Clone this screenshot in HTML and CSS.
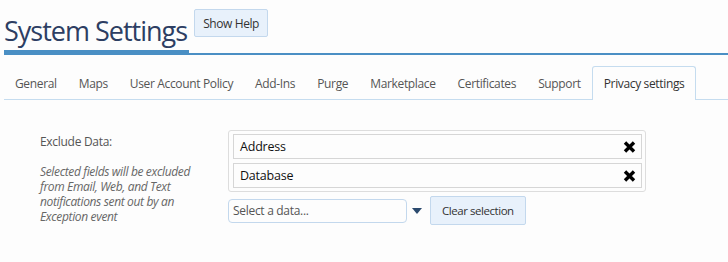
FILE: index.html
```html
<!DOCTYPE html>
<html lang="en">
<head>
    <meta charset="UTF-8">
    <title>System Settings</title>
    <link rel="stylesheet" href="styles.css">
</head>
<body>

    <div class="page-header">
        <h1 class="page-title">System Settings</h1>
        <button type="button" class="help-button">Show Help</button>
    </div>

    <ul class="tabs">
        <li class="tab">General</li>
        <li class="tab">Maps</li>
        <li class="tab">User Account Policy</li>
        <li class="tab">Add-Ins</li>
        <li class="tab">Purge</li>
        <li class="tab">Marketplace</li>
        <li class="tab">Certificates</li>
        <li class="tab">Support</li>
        <li class="tab active">Privacy settings</li>
    </ul>

    <div class="settings-row">
        <div class="settings-label">
            <div class="label-title">Exclude Data:</div>
            <p class="label-note">Selected fields will be excluded from Email, Web, and Text notifications sent out by an Exception event</p>
        </div>

        <div class="settings-field">
            <div class="selected-list">
                <div class="selected-item">
                    <span>Address</span>
                    <svg class="remove-icon" width="13" height="12" viewBox="0 0 13 12">
                        <path d="M2 1.5 L11 10.5 M11 1.5 L2 10.5" stroke="#000" stroke-width="3.4"/>
                    </svg>
                </div>
                <div class="selected-item">
                    <span>Database</span>
                    <svg class="remove-icon" width="13" height="12" viewBox="0 0 13 12">
                        <path d="M2 1.5 L11 10.5 M11 1.5 L2 10.5" stroke="#000" stroke-width="3.4"/>
                    </svg>
                </div>
            </div>

            <div class="select-row">
                <div class="select-box">Select a data...</div>
                <svg class="caret" width="10" height="6" viewBox="0 0 10 6">
                    <path d="M0 0 H10 L5 6 Z" fill="#2b4a6e"/>
                </svg>
                <button type="button" class="clear-button">Clear selection</button>
            </div>
        </div>
    </div>

</body>
</html>
```

FILE: styles.css
```css
body {
    font-family: 'Open Sans', 'Noto Sans', sans-serif;
    margin: 0;
    background-color: #fdfdfd;
    color: #333;
}

/* Header */
.page-header {
    display: flex;
    align-items: center;
    margin-left: 4px;
    border-bottom: 2px solid #4a8fc4;
    height: 55px;
    box-sizing: border-box;
}

.page-title {
    font-size: 27px;
    font-weight: normal;
    color: #2d3e63;
    margin: 0;
    padding: 6px 2px 0 0;
    height: 49px;
    line-height: 42px;
    box-sizing: border-box;
    border-bottom: 3px solid #4a8fc4;
    align-self: flex-end;
    letter-spacing: -1px;
}

.help-button {
    font-family: inherit;
    font-size: 12px;
    color: #333;
    background-color: #e8f1fb;
    border: 1px solid #c3d8ed;
    border-radius: 2px;
    padding: 0 8px;
    height: 28px;
    margin-left: 5px;
    margin-bottom: 7px;
    letter-spacing: -0.4px;
}

/* Tabs */
.tabs {
    list-style: none;
    display: flex;
    margin: 11px 0 0 4px;
    padding: 0;
    border-bottom: 1px solid #c5dcef;
}

.tab {
    font-size: 12px;
    color: #555;
    padding: 0 10px;
    height: 32px;
    line-height: 34px;
    border: 1px solid transparent;
    border-bottom: none;
    margin-bottom: -1px;
    letter-spacing: -0.35px;
}

.tab.active {
    color: #333;
    background-color: #fdfdfd;
    border-color: #c5dcef;
    border-radius: 3px 3px 0 0;
    padding: 0 11px;
    height: 33px;
}

/* Content */
.settings-row {
    display: flex;
    padding: 30px 0 0 40px;
}

.settings-label {
    width: 188px;
    font-size: 12px;
    color: #555;
}

.label-title {
    margin-top: 3px;
    letter-spacing: -0.3px;
}

.label-note {
    font-style: italic;
    color: #666;
    width: 160px;
    line-height: 15px;
    margin: 14px 0 0 0;
    letter-spacing: -0.35px;
}

.settings-field {
    width: 418px;
}

.selected-list {
    border: 1px solid #ddd;
    border-radius: 3px;
    padding: 3px 3px 3px 4px;
    display: flex;
    flex-direction: column;
    gap: 4px;
}

.selected-item {
    display: flex;
    justify-content: space-between;
    align-items: center;
    height: 23px;
    border: 1px solid #d6d6d6;
    padding: 0 5px 0 6px;
    font-size: 12.5px;
    color: #111;
    letter-spacing: -0.2px;
}

.select-row {
    display: flex;
    align-items: center;
    margin-top: 4px;
}

.select-box {
    width: 173px;
    height: 22px;
    line-height: 22px;
    border: 1px solid #c3d8ed;
    border-radius: 4px;
    padding-left: 4px;
    font-size: 12px;
    color: #555;
    letter-spacing: -0.3px;
}

.caret {
    margin: 0 8px 0 5px;
}

.clear-button {
    font-family: inherit;
    font-size: 11.5px;
    color: #333;
    background-color: #e8f1fb;
    border: 1px solid #c3d8ed;
    border-radius: 2px;
    height: 29px;
    padding: 0 11px;
    letter-spacing: -0.45px;
}
```
